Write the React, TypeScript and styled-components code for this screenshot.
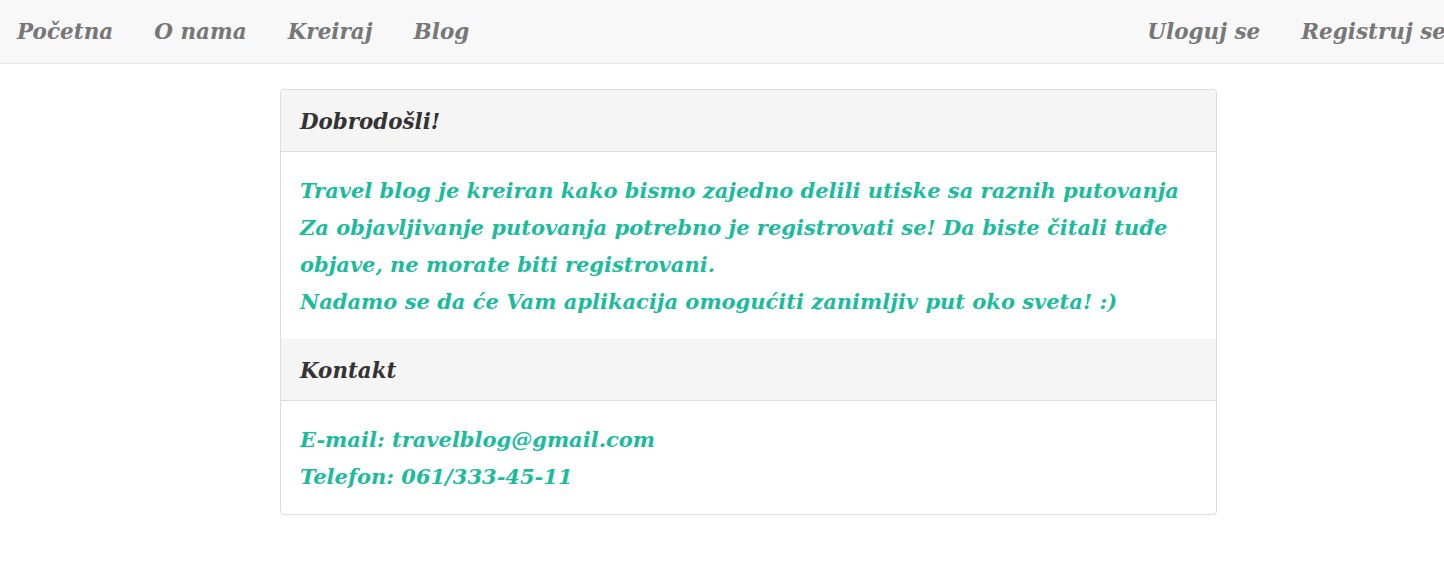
import React from "react";
import styled, { createGlobalStyle } from "styled-components";

const GlobalStyle = createGlobalStyle`
  body {
    margin: 0;
    background: #ffffff;
    font-family: "DejaVu Serif", Georgia, serif;
    font-style: italic;
    font-weight: bold;
  }
`;

const Navbar = styled.nav`
  display: flex;
  justify-content: space-between;
  align-items: center;
  height: 63px;
  background-color: #f8f8f8;
  border-bottom: 1px solid #e7e7e7;
  overflow: hidden;
`;

const NavGroup = styled.div<{ $right?: boolean }>`
  display: flex;
  align-items: center;
  margin-left: ${(p) => (p.$right ? "0" : "-3px")};
  margin-right: ${(p) => (p.$right ? "-23px" : "0")};
`;

const NavLink = styled.a`
  padding: 0 21px 0 20px;
  font-size: 21.5px;
  color: #777777;
  text-decoration: none;
  white-space: nowrap;
`;

const Main = styled.main`
  padding: 25px 227px 40px 280px;
`;

const Panel = styled.section`
  border: 1px solid #dddddd;
  border-radius: 4px;
  background: #ffffff;
  overflow: hidden;
`;

const PanelHeading = styled.h3`
  margin: 0;
  height: 62px;
  display: flex;
  align-items: center;
  padding: 1px 19px 0;
  box-sizing: border-box;
  background-color: #f5f5f5;
  border-bottom: 1px solid #dddddd;
  font-size: 21.4px;
  color: #333333;
`;

const PanelBody = styled.div`
  padding: 20px 19px 19px;
  font-size: 21px;
  line-height: 37px;
  color: #1abc9c;
`;

export default function App() {
  return (
    <>
      <GlobalStyle />
      <Navbar>
        <NavGroup>
          <NavLink>Početna</NavLink>
          <NavLink>O nama</NavLink>
          <NavLink>Kreiraj</NavLink>
          <NavLink>Blog</NavLink>
        </NavGroup>
        <NavGroup $right>
          <NavLink>Uloguj se</NavLink>
          <NavLink>Registruj se</NavLink>
        </NavGroup>
      </Navbar>
      <Main>
        <Panel>
          <PanelHeading>Dobrodošli!</PanelHeading>
          <PanelBody>
            Travel blog je kreiran kako bismo zajedno delili utiske sa raznih putovanja
            <br />
            Za objavljivanje putovanja potrebno je registrovati se! Da biste čitali tuđe
            objave, ne morate biti registrovani.
            <br />
            Nadamo se da će Vam aplikacija omogućiti zanimljiv put oko sveta! :)
          </PanelBody>
          <PanelHeading>Kontakt</PanelHeading>
          <PanelBody>
            E-mail: travelblog@gmail.com
            <br />
            Telefon: 061/333-45-11
          </PanelBody>
        </Panel>
      </Main>
    </>
  );
}
